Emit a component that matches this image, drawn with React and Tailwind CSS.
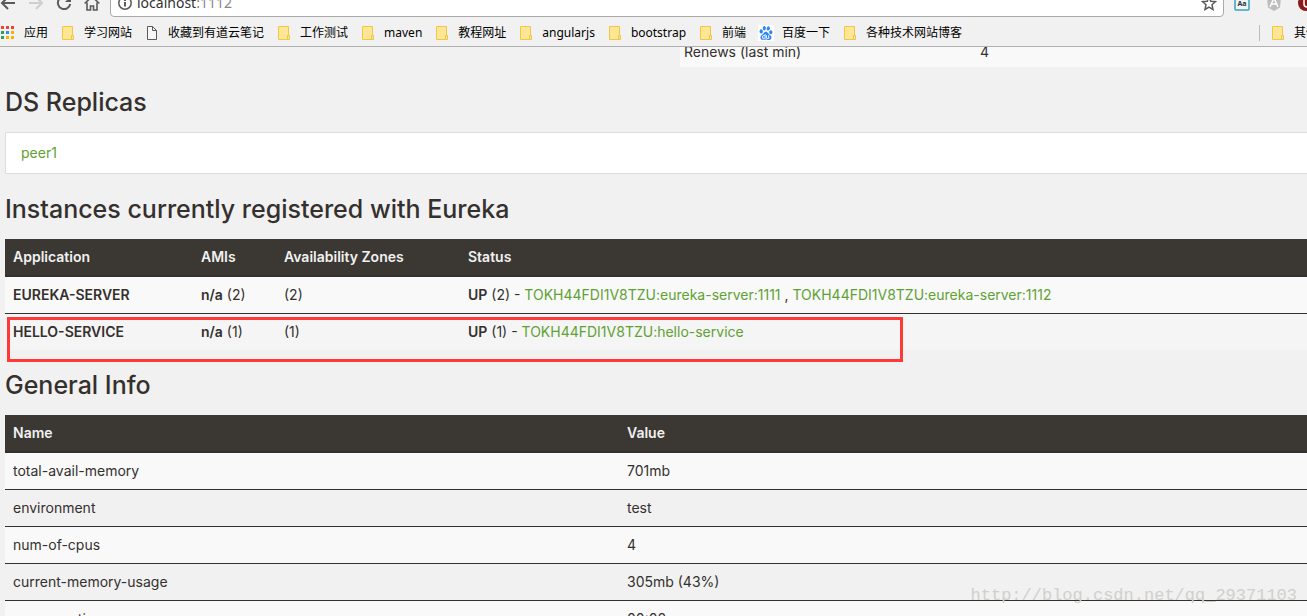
import { SiBaidu } from "react-icons/si";

const bookmarks = [
  { icon: "apps", label: "应用" },
  { icon: "folder", label: "学习网站" },
  { icon: "page", label: "收藏到有道云笔记" },
  { icon: "folder", label: "工作测试" },
  { icon: "folder", label: "maven" },
  { icon: "folder", label: "教程网址" },
  { icon: "folder", label: "angularjs" },
  { icon: "folder", label: "bootstrap" },
  { icon: "folder", label: "前端" },
  { icon: "baidu", label: "百度一下" },
  { icon: "folder", label: "各种技术网站博客" },
];

const instances = [
  {
    name: "EUREKA-SERVER",
    count: 2,
    hosts: ["TOKH44FDI1V8TZU:eureka-server:1111", "TOKH44FDI1V8TZU:eureka-server:1112"],
  },
  { name: "HELLO-SERVICE", count: 1, hosts: ["TOKH44FDI1V8TZU:hello-service"] },
];

const generalInfo = [
  ["total-avail-memory", "701mb"],
  ["environment", "test"],
  ["num-of-cpus", "4"],
  ["current-memory-usage", "305mb (43%)"],
  ["server-uptime", "00:08"],
];

const appColors = [
  "#f44336", "#f44336", "#f44336",
  "#2e9e58", "#2196f3", "#f5b400",
  "#2e9e58", "#f5b400", "#f5b400",
];

const BookmarkIcon = ({ type }) => {
  if (type === "apps") {
    return (
      <svg className="w-4 h-4 shrink-0" viewBox="0 0 16 16" shapeRendering="crispEdges">
        {appColors.map((color, i) => (
          <rect key={i} x={1 + (i % 3) * 5} y={1 + Math.floor(i / 3) * 5} width="3" height="3" fill={color} />
        ))}
      </svg>
    );
  }
  if (type === "page") {
    return (
      <svg className="w-4 h-4 shrink-0" viewBox="0 0 16 16" fill="#f8f8f8" stroke="#5a5a5a">
        <path d="M3.5 1.5h5l4 4v9h-9z" />
        <path d="M8.5 1.5v4h4" fill="none" />
      </svg>
    );
  }
  if (type === "baidu") {
    return (
      <span className="w-4 h-4 shrink-0 bg-white flex items-center justify-center text-[#2d86f5]">
        <SiBaidu className="w-3.5 h-3.5" />
      </span>
    );
  }
  return (
    <svg className="w-4 h-4 shrink-0" viewBox="0 0 16 16" fill="#ffe694" stroke="#ecc846">
      <path d="M2.5 1.5h10v13h-10z" />
      <path d="M11.5 10.5h2v4h-2z" />
    </svg>
  );
};

const Bookmark = ({ icon, label }) => (
  <a href="#" className="flex items-center gap-2 shrink-0 whitespace-nowrap">
    <BookmarkIcon type={icon} />
    {label}
  </a>
);

const Toolbar = () => (
  <div className="-mt-[11px] h-7 flex items-stretch text-[#5a5a5a]">
    <div className="flex items-center gap-3 pr-2.5">
      <button aria-label="Back">
        <svg className="w-4 h-4" viewBox="0 0 16 16" fill="none" stroke="currentColor" strokeWidth="2">
          <path d="M15 8H2M8 2L2 8l6 6" />
        </svg>
      </button>
      <button aria-label="Forward" className="text-[#cfcfcf]">
        <svg className="w-4 h-4" viewBox="0 0 16 16" fill="none" stroke="currentColor" strokeWidth="2">
          <path d="M1 8h13M8 2l6 6-6 6" />
        </svg>
      </button>
      <button aria-label="Reload">
        <svg className="w-4 h-4" viewBox="0 0 16 16" fill="none" stroke="currentColor" strokeWidth="2">
          <path d="M12.500 3.500A6.200 6.200 0 1 0 14.200 9" />
          <path d="M15 1v6H9z" fill="currentColor" stroke="none" />
        </svg>
      </button>
      <button aria-label="Home">
        <svg className="w-4 h-4" viewBox="0 0 16 16" fill="none" stroke="currentColor" strokeWidth="1.600">
          <path d="M.7 8.500L8 1.500l7.300 7M3 7.500V15h3.500v-4h3v4H13V7.500" />
        </svg>
      </button>
    </div>
    <div className="flex-1 flex items-center gap-1 px-1.5 bg-white border border-[#a9a9a9] rounded-sm">
      <svg className="w-4 h-4" viewBox="0 0 16 16" fill="none" stroke="currentColor">
        <circle cx="8" cy="8" r="6.200" strokeWidth="1.500" />
        <path d="M8 7v4.500M8 4v2" strokeWidth="2" />
      </svg>
      <div className="flex-1 text-sm text-[#333]">
        localhost<span className="text-[#888]">:1112</span>
      </div>
      <button aria-label="Bookmark this page">
        <svg className="w-4 h-4" viewBox="0 0 16 16" fill="none" stroke="currentColor" strokeWidth="1.500">
          <path d="M8 2l1.800 4.300 4.700.4-3.500 3.100 1 4.600-4-2.400-4 2.400 1-4.600L1.500 6.700l4.700-.4z" />
        </svg>
      </button>
    </div>
    <div className="flex items-center gap-4 w-[83px] pl-2.5 overflow-hidden">
      <svg className="w-4 h-4 shrink-0" viewBox="0 0 16 16">
        <rect x="1" y="1" width="14" height="14" rx="1" fill="#eef5f8" stroke="#3f9fb8" strokeWidth="1.500" />
        <text x="8" y="11" fontSize="7" fontWeight="bold" textAnchor="middle" fill="#333">Aa</text>
      </svg>
      <svg className="w-4 h-4 shrink-0" viewBox="0 0 16 16">
        <path d="M8 0l7 2.500-1 10L8 16l-6-3.500-1-10z" fill="#bdbdbd" />
        <path d="M4 12L8 3l4 9M5.500 9h5" fill="none" stroke="#fff" strokeWidth="1.500" />
      </svg>
      <svg className="w-4 h-4 shrink-0" viewBox="0 0 16 16">
        <circle cx="8" cy="8" r="8" fill="#8b1a1a" />
        <path d="M6 5v4a3 3 0 0 0 6 0V5" fill="none" stroke="#fff" strokeWidth="1.500" />
      </svg>
    </div>
  </div>
);

const Heading = ({ children }) => (
  <h1 className="pt-5 pb-[15px] text-[25px] leading-[30px] font-medium whitespace-nowrap">
    {children}
  </h1>
);

const headRow = "bg-[#3b3833] text-[#f1f1f1] border-b-2 border-[#34302d] text-left";
const headCell = "p-2 h-9 leading-5 font-semibold";
const cell = "p-2 h-9 leading-5";

const App = () => {
  return (
    <div className="h-screen overflow-hidden flex flex-col bg-[#f1f1f1] text-[#34302d] text-sm font-['Inter','Noto_Sans',sans-serif]">
      <header className="shrink-0 overflow-hidden border-b border-[#b0b0b0] font-['Noto_Sans','Noto_Sans_CJK_SC',sans-serif]">
        <Toolbar />
        <nav className="h-[29px] pt-0.5 flex items-center gap-3 text-xs text-black">
          {bookmarks.map((item) => (
            <Bookmark key={item.label} {...item} />
          ))}
          <div className="ml-auto w-12 h-4 shrink-0 flex items-center border-l border-[#bbb] pl-2.5 overflow-hidden">
            <Bookmark icon="folder" label="其他书签" />
          </div>
        </nav>
      </header>

      <main className="flex-1 min-h-0 overflow-hidden pl-[5px]">
        {/* Tail of the lease stats table */}
        <div className="h-5 flex items-end justify-end overflow-hidden">
          <table className="w-[627px] table-fixed bg-[#f9f9f9]">
            <tbody>
              <tr>
                <td className="w-[296px] pl-1 pb-[5px] leading-5">Renews (last min)</td>
                <td className="pl-1 pb-[5px] leading-5">4</td>
              </tr>
            </tbody>
          </table>
        </div>

        <Heading>DS Replicas</Heading>
        <ul className="bg-white border border-r-0 border-[#dddddd]">
          <li className="px-[15px] py-2.5 leading-5">
            <a href="#" className="text-[#5fa134]">peer1</a>
          </li>
        </ul>

        <Heading>Instances currently registered with Eureka</Heading>
        <div className="relative">
          <table className="w-full table-fixed">
            <thead>
              <tr className={headRow}>
                <th className={`${headCell} w-[188px]`}>Application</th>
                <th className={`${headCell} w-[83px]`}>AMIs</th>
                <th className={`${headCell} w-[184px]`}>Availability Zones</th>
                <th className={headCell}>Status</th>
              </tr>
            </thead>
            <tbody>
              {instances.map(({ name, count, hosts }) => (
                <tr key={name} className="bg-[#f9f9f9] even:bg-[#f5f5f5] border-b border-[#34302d] last:border-0">
                  <td className={`${cell} font-semibold`}>{name}</td>
                  <td className={cell}>
                    <b className="font-semibold">n/a</b> ({count})
                  </td>
                  <td className={cell}>({count})</td>
                  <td className={cell}>
                    <b className="font-semibold">UP</b> ({count}) -{" "}
                    {hosts.map((host, i) => (
                      <span key={host}>
                        {i > 0 && " , "}
                        <a href="#" className="text-[#5fa134]">{host}</a>
                      </span>
                    ))}
                  </td>
                </tr>
              ))}
            </tbody>
          </table>
          {/* Highlight around the hello-service row */}
          <div className="absolute left-0.5 top-[78px] w-[896px] h-[45px] border-3 border-[#ff3838] pointer-events-none" />
        </div>

        <Heading>General Info</Heading>
        <table className="w-full table-fixed">
          <thead>
            <tr className={headRow}>
              <th className={`${headCell} w-[614px]`}>Name</th>
              <th className={headCell}>Value</th>
            </tr>
          </thead>
          <tbody>
            {generalInfo.map(([name, value]) => (
              <tr key={name} className="odd:bg-[#f9f9f9] border-b border-[#34302d]">
                <td className={cell}>{name}</td>
                <td className={cell}>{value}</td>
              </tr>
            ))}
          </tbody>
        </table>
      </main>

      <div className="absolute right-2.5 bottom-2 text-[17px] leading-6 text-[#d0d0cb] font-['Liberation_Mono',monospace] pointer-events-none">
        http://blog.csdn.net/qq_29371103
      </div>
    </div>
  );
};

export default App;
